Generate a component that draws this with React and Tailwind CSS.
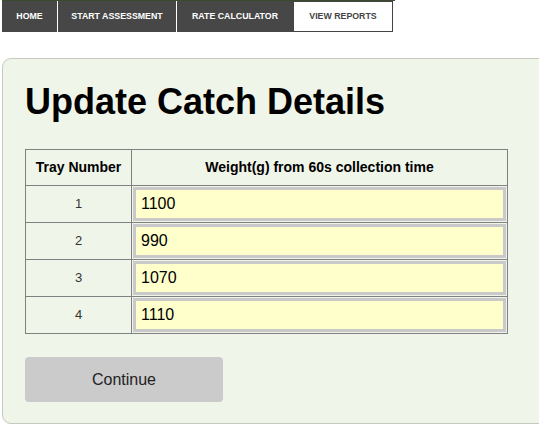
import React from "react";

const rows = [
  { n: 1, v: "1100" },
  { n: 2, v: "990" },
  { n: 3, v: "1070" },
  { n: 4, v: "1110" },
];

export default function App() {
  return (
    <div className="w-[539px] h-[425px] bg-white overflow-hidden" style={{ fontFamily: '"Liberation Sans", Arial, sans-serif' }}>
      <div className="flex ml-[2px] border-t-[1px] border-[#3b4a2c] w-[393px]">
        <div className="flex w-[291px] bg-[#474747] h-[31px]">
          <div className="w-[56px] flex items-center justify-center text-white font-bold text-[8.8px] border-r border-white">HOME</div>
          <div className="w-[119px] flex items-center justify-center text-white font-bold text-[8.8px] border-r border-white">START ASSESSMENT</div>
          <div className="w-[116px] flex items-center justify-center text-white font-bold text-[8.8px]">RATE CALCULATOR</div>
        </div>
        <div className="w-[100px] h-[31px] flex items-center justify-center bg-white border border-[#444] text-[#444] font-bold text-[8.8px]">VIEW REPORTS</div>
      </div>
      <div className="mt-[26px] ml-[2px] w-[560px] h-[366px] rounded-[9px] border border-[#c5cabd] bg-[#f0f5e9] pl-[22px] pt-[23px]">
        <h1 className="text-[36px] font-bold text-black leading-[40px] m-0">Update Catch Details</h1>
        <table className="mt-[27px] border-collapse w-[483px]">
          <thead>
            <tr>
              <th className="w-[106px] h-[36px] border border-[#808080] text-[14px] font-bold text-black p-0">Tray Number</th>
              <th className="h-[36px] border border-[#808080] text-[14px] font-bold text-black p-0">Weight(g) from 60s collection time</th>
            </tr>
          </thead>
          <tbody>
            {rows.map((r) => (
              <tr key={r.n}>
                <td className="border border-[#808080] text-center text-[13px] text-[#333] p-0">{r.n}</td>
                <td className="border border-[#808080] py-[1px] pl-[1px] pr-[1px]">
                  <input
                    readOnly
                    value={r.v}
                    className="block w-full h-[34px] bg-[#ffffcc] border-[3px] border-[#c9c9c9] pl-[5px] text-[16px] text-black outline-none"
                    style={{ fontFamily: '"Liberation Sans", Arial, sans-serif' }}
                  />
                </td>
              </tr>
            ))}
          </tbody>
        </table>
        <button className="mt-[23px] w-[198px] h-[45px] bg-[#cbcbcb] rounded-[4px] text-[16px] text-[#222]">Continue</button>
      </div>
    </div>
  );
}
